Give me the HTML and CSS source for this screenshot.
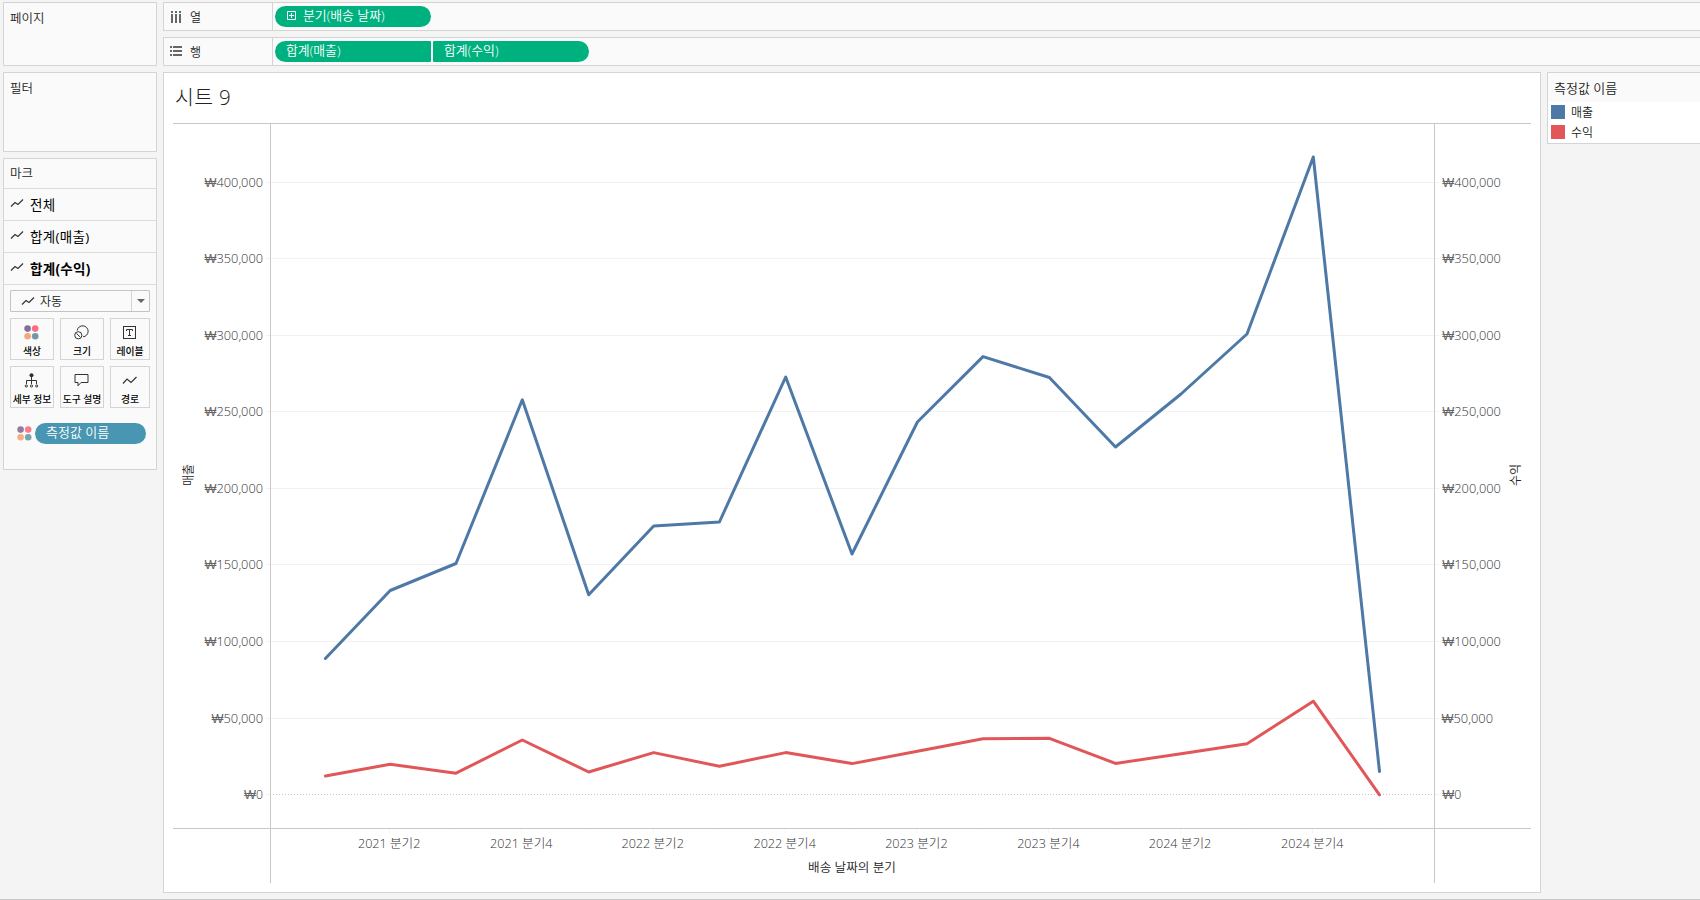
FILE: index.html
```html
<!DOCTYPE html>
<html lang="ko">
<head>
  <meta charset="UTF-8" />
  <meta name="viewport" content="width=device-width, initial-scale=1.0"/>
  <title>시트 9</title>
  <link rel="stylesheet" href="styles.css">
</head>
<body>
  <svg width="0" height="0" class="defs">
    <symbol id="icon-line" viewBox="0 0 14 10">
      <path d="M1 8.5 L5 4.5 L8 6.5 L13 1.5" fill="none" stroke="#333" stroke-width="1.2"/>
    </symbol>
    <symbol id="icon-color" viewBox="0 0 15 15">
      <circle cx="3.6" cy="3.6" r="3.3" fill="#866e9a"/>
      <circle cx="11.2" cy="3.6" r="3.3" fill="#fa7080"/>
      <circle cx="3.6" cy="11.2" r="3.3" fill="#f4a77c"/>
      <circle cx="11.2" cy="11.2" r="3.3" fill="#6f9ba8"/>
    </symbol>
  </svg>

  <div class="sidebar">
    <div class="card pages">페이지</div>
    <div class="card filters">필터</div>
    <div class="card marks">
      <div class="marks-title">마크</div>
      <div class="marks-row"><svg width="14" height="10"><use href="#icon-line"/></svg><span>전체</span></div>
      <div class="marks-row"><svg width="14" height="10"><use href="#icon-line"/></svg><span>합계(매출)</span></div>
      <div class="marks-row active"><svg width="14" height="10"><use href="#icon-line"/></svg><span>합계(수익)</span></div>

      <div class="mark-type">
        <div class="mark-type-name"><svg width="14" height="10"><use href="#icon-line"/></svg><span>자동</span></div>
        <div class="mark-type-arrow"></div>
      </div>

      <div class="mark-buttons">
        <div class="mark-button">
          <svg width="15" height="15"><use href="#icon-color"/></svg>
          <span>색상</span>
        </div>
        <div class="mark-button">
          <svg width="15" height="15" viewBox="0 0 15 15" fill="none" stroke="#333">
            <path d="M3.2 5.5 A5.5 5.5 0 1 1 9 11.8"/>
            <circle cx="4.3" cy="10.3" r="3.6"/>
            <path d="M2.5 8.5 L6.2 12"/>
          </svg>
          <span>크기</span>
        </div>
        <div class="mark-button">
          <svg width="15" height="15" viewBox="0 0 15 15" fill="none" stroke="#333">
            <rect x="1.5" y="1.5" width="12" height="12"/>
            <path d="M4.5 6 V4.5 H10.5 V6 M7.5 4.5 V10.5 M6 10.5 H9"/>
          </svg>
          <span>레이블</span>
        </div>
        <div class="mark-button">
          <svg width="15" height="15" viewBox="0 0 15 15" fill="none" stroke="#333">
            <circle cx="7.5" cy="2.3" r="2" fill="#333" stroke="none"/>
            <path d="M7.5 4 V11 M2.5 11 V7.5 H12.5 V11"/>
            <circle cx="2.3" cy="13" r="1.1"/>
            <circle cx="7.5" cy="13" r="1.1"/>
            <circle cx="12.7" cy="13" r="1.1"/>
          </svg>
          <span>세부 정보</span>
        </div>
        <div class="mark-button">
          <svg width="15" height="15" viewBox="0 0 15 15" fill="none" stroke="#333">
            <path d="M1 1.5 H14 V9.5 H7 L4 12.8 V9.5 H1 Z"/>
          </svg>
          <span>도구 설명</span>
        </div>
        <div class="mark-button">
          <svg width="15" height="15" viewBox="0 0 15 15" fill="none" stroke="#333" stroke-width="1.2">
            <path d="M1 10.5 L5 6 L9 9.5 L14.5 4"/>
          </svg>
          <span>경로</span>
        </div>
      </div>

      <div class="mark-pill-row">
        <svg width="15" height="15" opacity="0.9"><use href="#icon-color"/></svg>
        <div class="pill blue">측정값 이름</div>
      </div>
    </div>
  </div>

  <div class="main">
    <div class="shelf">
      <div class="shelf-name">
        <svg width="12" height="12" fill="#666">
          <path d="M1 0h2v2h-2z M5 0h2v2h-2z M9 0h2v2h-2z M1 3h2v9h-2z M5 3h2v9h-2z M9 3h2v9h-2z"/>
        </svg>
        <span>열</span>
      </div>
      <div class="pill first">
        <svg width="9" height="9" fill="none" stroke="#fff"><path d="M0.5 0.5h8v8h-8z M2 4.5h5 M4.5 2v5"/></svg>
        <span>분기(배송 날짜)</span>
      </div>
    </div>
    <div class="shelf">
      <div class="shelf-name">
        <svg width="12" height="12" fill="#666">
          <path d="M0 0h2v2h-2z M3 0h9v2h-9z M0 4h2v2h-2z M3 4h9v2h-9z M0 8h2v2h-2z M3 8h9v2h-9z"/>
        </svg>
        <span>행</span>
      </div>
      <div class="pill left">합계(매출)</div>
      <div class="pill right">합계(수익)</div>
    </div>

    <div class="view">
      <div class="sheet">
        <div class="sheet-title">시트 9</div>
        <svg id="chart" width="1376" height="779" viewBox="164 113 1376 779"></svg>
      </div>

      <div class="legend">
        <div class="legend-title">측정값 이름</div>
        <div class="legend-item"><i class="swatch sales"></i><span>매출</span></div>
        <div class="legend-item"><i class="swatch profit"></i><span>수익</span></div>
      </div>
    </div>
  </div>

  <script>
    const xs = [325.4, 390.2, 456, 522.3, 588.7, 653.7, 719.4, 785.7, 852, 917.4, 983, 1049.4, 1115.5, 1181, 1247, 1313.3, 1379.5];
    const sales = [658.5, 590.5, 563.5, 399.8, 594.8, 526, 522, 377, 554, 422, 356.6, 377.5, 447, 394, 334, 157, 771.5];
    const profit = [776, 764.3, 773.2, 740, 772, 752.6, 766.3, 752.6, 763.6, 751.3, 738.8, 738.3, 763.4, 753.7, 743.8, 701.2, 794.8];
    const gridY = [794, 718, 641, 564, 488, 411, 335, 258, 182];

    let svg = "";

    function line(x1, y1, x2, y2, cls) {
      svg += `<line x1="${x1}" y1="${y1}" x2="${x2}" y2="${y2}" class="${cls}"/>`;
    }

    function text(x, y, cls, str, width) {
      const fit = width ? ` textLength="${width}" lengthAdjust="spacingAndGlyphs"` : "";
      svg += `<text x="${x}" y="${y}" class="${cls}"${fit}>${str}</text>`;
    }

    // 값 축
    gridY.forEach((y, i) => {
      const amount = (i * 50000).toLocaleString("en-US");
      const width = i === 0 ? 7 : i === 1 ? 39.5 : 46.5;
      if (i === 0) {
        line(266, y + 0.5, 270, y + 0.5, "grid");
        line(1435, y + 0.5, 1439, y + 0.5, "grid");
        line(273, y + 0.5, 1434, y + 0.5, "zero");
      } else {
        line(266, y + 0.5, 1439, y + 0.5, "grid");
      }
      const right = i === 1 ? 1441.5 : 1442.3;
      text(263, y + 5, "tick end", amount, width);
      text(263 - width - 12, y + 5, "tick won", "₩", 12);
      text(right + 12, y + 5, "tick", amount, width);
      text(right, y + 5, "tick won", "₩", 12);
    });

    // 날짜 축
    xs.forEach((x, i) => {
      const tx = Math.floor(x - 0.5) + 0.5;
      line(tx, 829, tx, i % 2 ? 833 : 830, "grid");
      if (i % 2) {
        const year = 2021 + Math.floor(i / 4);
        text(x - 1, 848, "tick middle", `${year} 분기${i % 4 + 1}`, 62.5);
      }
    });

    line(173, 123.5, 1531, 123.5, "axis");
    line(173, 828.5, 1531, 828.5, "axis");
    line(270.5, 123, 270.5, 883, "axis");
    line(1434.5, 123, 1434.5, 883, "axis");

    text(852, 872, "axis-title middle", "배송 날짜의 분기", 88);
    svg += `<text class="axis-title middle" transform="translate(193 475) rotate(-90)">매출</text>`;
    svg += `<text class="axis-title middle" transform="translate(1520 475) rotate(-90)">수익</text>`;

    [[sales, "sales"], [profit, "profit"]].forEach(([ys, cls]) => {
      const points = xs.map((x, i) => x + "," + ys[i]).join(" ");
      svg += `<polyline points="${points}" class="series ${cls}"/>`;
    });

    document.getElementById("chart").innerHTML = svg;
  </script>
</body>
</html>
```
FILE: styles.css
```css
* {
  box-sizing: border-box;
}
body {
  font-family: "Open Sans", "Noto Sans CJK KR", sans-serif;
  font-size: 12px;
  margin: 0;
  padding: 2px 0 0 3px;
  height: 900px;
  display: flex;
  gap: 6px;
  overflow: hidden;
  color: #222;
  background-color: #f4f4f4;
  border-bottom: 1px solid #c8c8c8;
}
svg {
  display: block;
  flex: none;
}
.defs {
  position: absolute;
}
.sidebar {
  width: 154px;
  flex: none;
  display: flex;
  flex-direction: column;
  gap: 6px;
}
.card {
  background-color: #fafafa;
  border: 1px solid #d4d4d4;
  line-height: 16px;
}
.pages, .filters {
  padding: 8px 6px;
  font-size: 12.5px;
  font-weight: 350;
}
.pages {
  height: 64px;
}
.filters {
  height: 80px;
}
.marks {
  height: 312px;
}
.marks-title {
  height: 30px;
  padding: 7px 6px;
  font-size: 12.5px;
  font-weight: 350;
  border-bottom: 1px solid #dcdcdc;
}
.marks-row {
  height: 32px;
  padding-left: 6px;
  display: flex;
  align-items: center;
  gap: 6px;
  font-size: 13.5px;
  color: #000;
  border-bottom: 1px solid #dcdcdc;
}
.marks-row span {
  letter-spacing: 0.3px;
}
.marks-row svg {
  margin-top: -3px;
}
.active {
  font-weight: bold;
}
.mark-type {
  display: flex;
  height: 22px;
  margin: 5px 6px 6px;
  border: 1px solid #c4c4c4;
  border-radius: 1px;
}
.mark-type-name {
  flex: 1;
  display: flex;
  align-items: center;
  gap: 5px;
  padding-left: 10px;
  font-weight: 350;
}
.mark-type-name span {
  padding-top: 1px;
}
.mark-type-arrow {
  width: 18px;
  border-left: 1px solid #d4d4d4;
  display: flex;
  align-items: center;
  justify-content: center;
}
.mark-type-arrow::before {
  content: "";
  border: 4px solid transparent;
  border-top-color: #666;
  border-bottom: none;
}
.mark-buttons {
  display: grid;
  grid-template-columns: 44px 44px 40px;
  gap: 6px;
  padding-left: 6px;
}
.mark-button {
  height: 42px;
  padding: 6px 0 0;
  display: flex;
  flex-direction: column;
  align-items: center;
  gap: 5px;
  font-size: 9.8px;
  font-weight: 500;
  line-height: 14px;
  white-space: nowrap;
  color: #000;
  border: 1px solid #d4d4d4;
}
.mark-button svg {
  margin-right: 1px;
}
.mark-pill-row {
  display: flex;
  align-items: center;
  gap: 3px;
  padding: 15px 0 0 13px;
}
.pill {
  height: 21px;
  width: 156px;
  padding: 0 0 4px 11px;
  display: flex;
  align-items: center;
  gap: 7px;
  color: #fff;
  font-size: 12.9px;
  font-weight: 350;
  background-color: #00b180;
  border-radius: 11px;
}
.pill svg {
  margin-top: 2px;
}
.pill.blue {
  width: 111px;
  font-size: 13px;
  background-color: #4996b2;
}
.pill.first {
  padding-left: 12px;
}
.pill.left {
  border-radius: 11px 1px 1px 11px;
}
.pill.right {
  margin-left: 2px;
  border-radius: 1px 11px 11px 1px;
}
.main {
  flex: 1;
  display: flex;
  flex-direction: column;
  gap: 6px;
}
.shelf {
  height: 29px;
  display: flex;
  align-items: center;
  background-color: #fafafa;
  border: 1px solid #d4d4d4;
  border-right: none;
}
.shelf-name {
  width: 109px;
  height: 27px;
  margin-right: 2px;
  padding-left: 6px;
  display: flex;
  align-items: center;
  gap: 8px;
  font-weight: 350;
  border-right: 1px solid #d4d4d4;
}
.shelf-name span {
  padding-top: 1px;
}
.view {
  display: flex;
  align-items: flex-start;
  gap: 6px;
}
.sheet {
  width: 1378px;
  height: 821px;
  flex: none;
  background-color: #fff;
  border: 1px solid #d4d4d4;
}
.sheet-title {
  height: 40px;
  padding: 10px 0 0 11px;
  font-size: 20.5px;
  font-weight: 300;
  line-height: 28px;
  letter-spacing: 0.3px;
}
.legend {
  flex: 1;
  height: 72px;
  background-color: #fff;
  border: 1px solid #d4d4d4;
  border-right: none;
}
.legend-title {
  height: 29px;
  padding: 7px 6px;
  font-size: 13px;
  font-weight: 350;
  line-height: 16px;
  background-color: #fafafa;
}
.legend-item {
  height: 20px;
  padding-left: 3px;
  display: flex;
  align-items: center;
  gap: 6px;
  font-weight: 350;
}
.swatch {
  width: 14px;
  height: 14px;
}
.swatch.sales {
  background-color: #4e79a7;
}
.swatch.profit {
  background-color: #e15759;
}
.axis {
  stroke: #c8c8c8;
}
.grid {
  stroke: #f2f2f2;
}
.zero {
  stroke: #c8c8c8;
  stroke-dasharray: 1 2;
}
.tick {
  font-size: 12.5px;
  font-weight: 300;
  fill: #333;
}
.won {
  font-family: "Liberation Sans", "Noto Sans CJK KR", sans-serif;
  font-size: 12px;
  fill: #666;
}
.axis-title {
  font-size: 12px;
  font-weight: 350;
  fill: #222;
}
.end {
  text-anchor: end;
}
.middle {
  text-anchor: middle;
}
.series {
  fill: none;
  stroke-width: 3;
  stroke-linecap: round;
  stroke-linejoin: round;
}
.series.sales {
  stroke: #4e79a7;
}
.series.profit {
  stroke: #e15759;
}
```
